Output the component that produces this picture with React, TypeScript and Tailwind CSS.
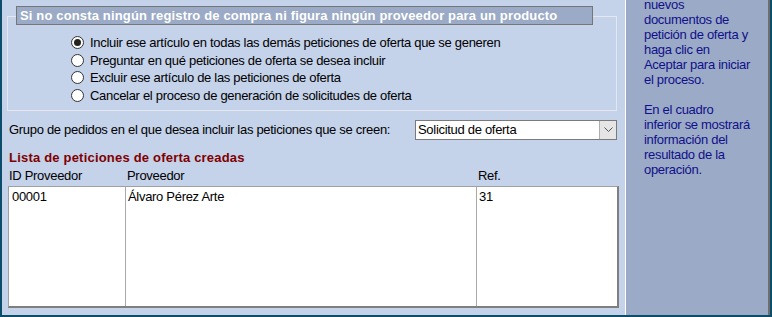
import React from 'react';

const options = [
  'Incluir ese artículo en todas las demás peticiones de oferta que se generen',
  'Preguntar en qué peticiones de oferta se desea incluir',
  'Excluir ese artículo de las peticiones de oferta',
  'Cancelar el proceso de generación de solicitudes de oferta',
];

const Radio: React.FC<{ checked?: boolean; label: string }> = ({ checked, label }) => (
  <div className="flex items-center h-[17.5px]">
    <span className="w-[13px] h-[13px] rounded-full border border-[#333] bg-white flex items-center justify-center shrink-0">
      {checked && <span className="w-[7px] h-[7px] rounded-full bg-[#222]" />}
    </span>
    <span className="ml-[6px] whitespace-nowrap">{label}</span>
  </div>
);

export default function App() {
  return (
    <div
      className="w-[772px] h-[317px] bg-[#0d4d6c] flex pl-[2px] pr-[2px] pb-[2px] text-[13px] tracking-[-0.3px] text-black overflow-hidden"
      style={{ fontFamily: '"Liberation Sans", Arial, sans-serif' }}
    >
      <div className="w-[623px] h-[315px] bg-[#c4d2ea] flex flex-col">
        {/* group box */}
        <div className="relative mt-[16px] ml-[5px] w-[610px] h-[95px] border border-[#e3e6ec]">
          <div className="absolute left-[8px] top-[-11px] w-[577px] h-[19px] bg-[#9baac6] border border-[#767676] flex items-center pl-[3px] text-white font-bold tracking-[0.15px] whitespace-nowrap">
            Si no consta ningún registro de compra ni figura ningún proveedor para un producto
          </div>
          <div className="pt-[17px] pl-[63px] flex flex-col">
            {options.map((o, i) => (
              <Radio key={i} label={o} checked={i === 0} />
            ))}
          </div>
        </div>

        <div className="mt-[9px] pl-[7px] pr-[8px] h-[20px] flex items-center justify-between">
          <span className="whitespace-nowrap">Grupo de pedidos en el que desea incluir las peticiones que se creen:</span>
          <div className="w-[202px] h-[20px] bg-white border border-[#7a7a7a] flex items-center">
            <span className="flex-1 pl-[2px] whitespace-nowrap">Solicitud de oferta</span>
            <span className="w-[17px] h-[18px] bg-[#e5e5e5] border-l border-[#adadad] flex items-center justify-center">
              <svg width="9" height="6" viewBox="0 0 9 6">
                <path d="M0.5 0.5 L4.5 4.5 L8.5 0.5" fill="none" stroke="#555" strokeWidth="1" />
              </svg>
            </span>
          </div>
        </div>

        <div className="mt-[10px] pl-[7px] leading-[15px] font-bold tracking-[0.2px] text-[#800000] whitespace-nowrap">
          Lista de peticiones de oferta creadas
        </div>

        <div className="mt-[3px] leading-[15px] flex whitespace-nowrap">
          <span className="pl-[7px] w-[125px]">ID Proveedor</span>
          <span className="w-[351px]">Proveedor</span>
          <span>Ref.</span>
        </div>

        <div className="mt-[3px] ml-[6px] w-[611px] h-[122px] bg-white border-t border-l border-[#a0a0a0] border-r-2 border-b-2 border-r-[#7f7f7f] border-b-[#7f7f7f] flex">
          <div className="w-[117px] border-r border-[#a9a9a9] pl-[3px] pt-[2px] leading-[15px]">00001</div>
          <div className="w-[351px] border-r border-[#a9a9a9] pl-[2px] pt-[2px] leading-[15px] whitespace-nowrap">Álvaro Pérez Arte</div>
          <div className="flex-1 pl-[2px] pt-[2px] leading-[15px]">31</div>
        </div>
      </div>

      <div className="w-[143px] h-[315px] bg-[#9baac6] border-l border-white overflow-hidden">
        <div className="mt-[-3px] pl-[18px] leading-[15px] text-[#10108a] whitespace-nowrap">
          nuevos
          <br />
          documentos de
          <br />
          petición de oferta y
          <br />
          haga clic en
          <br />
          Aceptar para iniciar
          <br />
          el proceso.
          <br />
          <br />
          En el cuadro
          <br />
          inferior se mostrará
          <br />
          información del
          <br />
          resultado de la
          <br />
          operación.
        </div>
      </div>
      <div className="w-[2px] h-[315px] bg-[#6e6e6e]" />
    </div>
  );
}
